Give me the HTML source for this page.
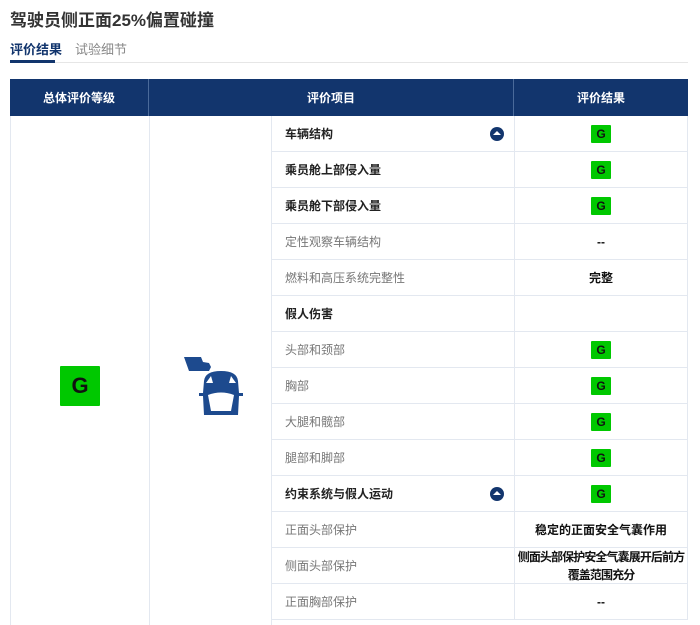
<!DOCTYPE html>
<html><head><meta charset="utf-8"><style>
*{margin:0;padding:0;box-sizing:border-box}
body{width:700px;height:625px;overflow:hidden;background:#fff;font-family:"Liberation Sans","Noto Sans CJK SC",sans-serif;position:relative}
.a{position:absolute}
h1{position:absolute;left:10px;top:6px;font-size:17px;font-weight:bold;color:#333}
.tab{position:absolute;top:39px;font-size:13px}
.hd{position:absolute;top:79px;height:37px;background:#12356d;color:#fff;font-size:12px;font-weight:bold;display:flex;align-items:center;justify-content:center;border-right:1px solid #4a6a9a}
.cell{position:absolute;height:36px;border-bottom:1px solid #e3e8f0;display:flex;align-items:center;font-size:12px}
.it{left:271px;width:243px;padding-left:14px;color:#777}
.it.b{color:#222;font-weight:bold}
.rs{left:514px;width:174px;justify-content:center;font-weight:bold;color:#111;text-align:center;line-height:18px;border-left:1px solid #e3e8f0;border-right:1px solid #e3e8f0}
.g{width:20px;height:18px;background:#00c800;color:#111;font-weight:bold;font-size:12px;display:flex;align-items:center;justify-content:center;border-radius:1px}
.up{position:absolute;right:10px;top:11px;width:14px;height:14px;border-radius:50%;background:#12356d}
.up:after{content:"";position:absolute;left:3px;top:4px;border:4px solid transparent;border-bottom:4px solid #fff;border-top:0}
</style></head><body>
<h1>驾驶员侧正面25%偏置碰撞</h1>
<div class="tab" style="left:10px;color:#12356d;font-weight:bold">评价结果</div>
<div class="tab" style="left:75px;color:#888">试验细节</div>
<div class="a" style="left:10px;top:62px;width:678px;height:1px;background:#e6e6e6"></div>
<div class="a" style="left:10px;top:60px;width:45px;height:3px;background:#12356d"></div>
<div class="hd" style="left:10px;width:139px">总体评价等级</div>
<div class="hd" style="left:149px;width:365px">评价项目</div>
<div class="hd" style="left:514px;width:174px;border-right:0">评价结果</div>
<div class="a" style="left:10px;top:116px;width:1px;height:509px;background:#e3e8f0"></div>
<div class="a" style="left:149px;top:116px;width:1px;height:509px;background:#e3e8f0"></div>
<div class="a" style="left:271px;top:116px;width:1px;height:509px;background:#e3e8f0"></div>
<div class="a g" style="left:60px;top:366px;width:40px;height:40px;font-size:22px">G</div>
<svg class="a" style="left:183px;top:355px" width="64" height="64" viewBox="0 0 64 64">
<path d="M1 2 H18 L20 7 L26 8 L28 12 L26 16 H6 Z" fill="#1d4a8e"/>
<path d="M21 26 Q22 16 38 16 Q54 16 55 26 L56 38 L60 38 L60 41 L56 41 L55 60 H21 L20 41 L16 41 L16 38 L20 38 Z" fill="#1d4a8e"/>
<path d="M25 40 Q38 35 51 40 L48 56 H28 Z" fill="#fff"/>
<path d="M23 28 L28 21 L30 28 Z M53 28 L48 21 L46 28 Z" fill="#fff"/>
</svg>

<div class="cell it b" style="top:116px">车辆结构<span class="up"></span></div>
<div class="cell rs" style="top:116px"><span class="g">G</span></div>
<div class="cell it b" style="top:152px">乘员舱上部侵入量</div>
<div class="cell rs" style="top:152px"><span class="g">G</span></div>
<div class="cell it b" style="top:188px">乘员舱下部侵入量</div>
<div class="cell rs" style="top:188px"><span class="g">G</span></div>
<div class="cell it" style="top:224px">定性观察车辆结构</div>
<div class="cell rs" style="top:224px">--</div>
<div class="cell it" style="top:260px">燃料和高压系统完整性</div>
<div class="cell rs" style="top:260px">完整</div>
<div class="cell it b" style="top:296px">假人伤害</div>
<div class="cell rs" style="top:296px"></div>
<div class="cell it" style="top:332px">头部和颈部</div>
<div class="cell rs" style="top:332px"><span class="g">G</span></div>
<div class="cell it" style="top:368px">胸部</div>
<div class="cell rs" style="top:368px"><span class="g">G</span></div>
<div class="cell it" style="top:404px">大腿和髋部</div>
<div class="cell rs" style="top:404px"><span class="g">G</span></div>
<div class="cell it" style="top:440px">腿部和脚部</div>
<div class="cell rs" style="top:440px"><span class="g">G</span></div>
<div class="cell it b" style="top:476px">约束系统与假人运动<span class="up"></span></div>
<div class="cell rs" style="top:476px"><span class="g">G</span></div>
<div class="cell it" style="top:512px">正面头部保护</div>
<div class="cell rs" style="top:512px"><span>稳定的正面安全气囊作用</span></div>
<div class="cell it" style="top:548px">侧面头部保护</div>
<div class="cell rs" style="top:548px"><span style="font-size:12px;letter-spacing:-0.9px;white-space:nowrap;line-height:18px">侧面头部保护安全气囊展开后前方<br>覆盖范围充分</span></div>
<div class="cell it" style="top:584px">正面胸部保护</div>
<div class="cell rs" style="top:584px">--</div>
</body></html>
